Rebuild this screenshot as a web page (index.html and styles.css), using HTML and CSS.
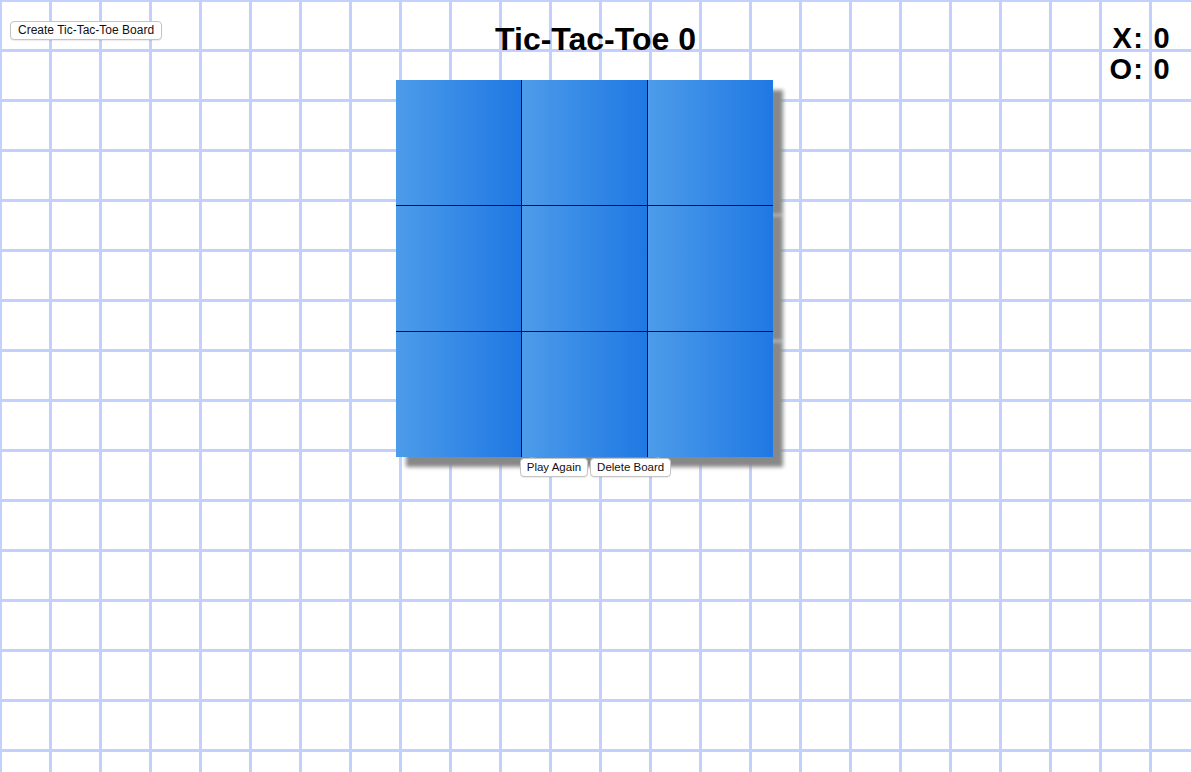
FILE: index.html
```html
<!DOCTYPE html>
<html>
<head>
<meta charset="utf-8">
<title>Tic-Tac-Toe</title>
<link rel="stylesheet" href="styles.css">
</head>
<body>
<div class="page">
  <button class="btn create-btn">Create Tic-Tac-Toe Board</button>
  <h1 class="title">Tic-Tac-Toe 0</h1>
  <div class="scores">
    <div class="score">X: 0</div>
    <div class="score">O: 0</div>
  </div>
  <div class="board-wrap">
    <div class="board">
      <div class="cell c-r"></div><div class="cell c-r"></div><div class="cell"></div>
      <div class="cell c-r c-b"></div><div class="cell c-r c-b"></div><div class="cell c-b"></div>
      <div class="cell c-r c-b"></div><div class="cell c-r c-b"></div><div class="cell c-b"></div>
    </div>
  </div>
  <div class="actions">
    <button class="btn">Play Again</button>
    <button class="btn">Delete Board</button>
  </div>
</div>
</body>
</html>
```

FILE: styles.css
```css
html, body {
  margin: 0;
  padding: 0;
}
body {
  min-height: 772px;
  background-color: #ffffff;
  background-image:
    linear-gradient(to right, #c1d1fb 0, #c1d1fb 3px, transparent 3px),
    linear-gradient(to bottom, #c1d1fb 0, #c1d1fb 3px, transparent 3px);
  background-size: 50px 50px;
  background-position: -1px -1px;
  font-family: "Liberation Sans", Arial, sans-serif;
  color: #000;
}
.page {
  display: grid;
  grid-template-columns: 1fr auto 1fr;
  padding: 21px 8px 0 8px;
}
.btn {
  font-family: "Liberation Sans", Arial, sans-serif;
  font-size: 11.5px;
  height: 19px;
  line-height: 15px;
  padding: 0 6px;
  background: #ffffff;
  border: 1px solid #c4c4c4;
  border-radius: 4px;
  color: #111;
  box-shadow: 0 1px 1px rgba(0,0,0,0.08);
}
.create-btn {
  grid-column: 1;
  grid-row: 1;
  justify-self: start;
  align-self: start;
  margin-left: 2px;
  font-size: 12px;
  padding: 0 7px;
}
.title {
  grid-column: 2;
  grid-row: 1;
  margin: 0;
  font-size: 32px;
  line-height: 37px;
  font-weight: bold;
  text-align: center;
}
.scores {
  grid-column: 3;
  grid-row: 1 / 3;
  justify-self: end;
  align-self: start;
  margin-top: 2px;
  margin-right: 12px;
  text-align: right;
}
.score {
  font-size: 29px;
  line-height: 31px;
  font-weight: bold;
  letter-spacing: 1.3px;
}
.board-wrap {
  grid-column: 2;
  grid-row: 2;
  width: 399px;
  margin-top: 22px;
}
.board {
  display: grid;
  grid-template-columns: 126px 126px 125px;
  grid-template-rows: 125px 126px 126px;
  width: 377px;
}
.cell {
  background: linear-gradient(to right, #4d9cea, #1f78e3);
  box-shadow: 10px 10px 4px #888888;
}
.c-r {
  border-right: 1px solid #08122a;
}
.c-b {
  border-top: 1px solid #08122a;
}
.actions {
  grid-column: 1 / -1;
  grid-row: 3;
  display: flex;
  justify-content: center;
  gap: 2px;
  margin-top: 1px;
}
```
